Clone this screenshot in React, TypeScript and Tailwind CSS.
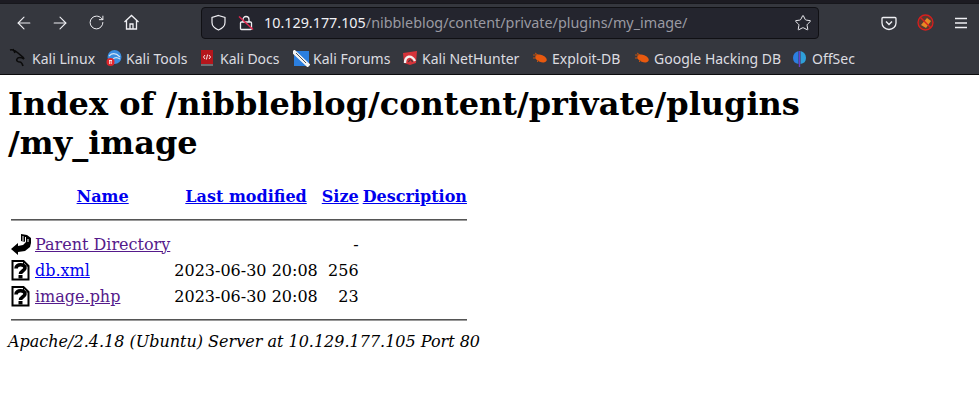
import { ArrowLeft, ArrowRight, RotateCw, Star } from "lucide-react";

const dragon = (
  <svg width="18" height="20" viewBox="0 0 18 20" fill="none" className="-ml-[3px] shrink-0">
    <path d="M1 2c3-1 6 1 8 3 2 2 5 3 6 6M15 11c-3-2-6-2-7 0-1 2 1 3 3 3 1 0 2 1 3 4M4 1l2 4" stroke="#0b0b0b" strokeWidth="1.600" />
  </svg>
);

const toolsIcon = (
  <svg width="16" height="18" viewBox="0 0 16 18" className="shrink-0">
    <circle cx="8.500" cy="8" r="7" fill="#3a8de0" />
    <path d="M3 7c3-3 7-3 11 1M7 10c2-2 4-2 7 0" stroke="#cfe4f7" strokeWidth="1.200" fill="none" />
    <circle cx="4.500" cy="13" r="4" fill="#e0262c" />
    <path d="M3 11.500h3M3.600 11.500v3.500M5.200 11.500v3.500" stroke="#fff" strokeWidth="0.800" />
  </svg>
);

const docsIcon = (
  <svg width="14" height="18" viewBox="0 0 14 18" className="shrink-0">
    <rect x="1" y="1" width="12" height="15" fill="#b5161c" />
    <rect x="1" y="15" width="12" height="2" fill="#6d6f73" />
    <path d="M5 6L3.500 8 5 10M9 6l1.500 2L9 10M7.600 5.500L6.400 10.500" stroke="#fff" strokeWidth="0.900" fill="none" />
  </svg>
);

const forumsIcon = (
  <svg width="17" height="17" viewBox="0 0 17 17" className="shrink-0">
    <path d="M1 1h15v15H1z" fill="#2b7fe0" />
    <path d="M0 1l16 15" stroke="#f4f4f4" strokeWidth="4" />
    <path d="M3 3l10 10" stroke="#50535a" strokeWidth="1" />
  </svg>
);

const hunterIcon = (
  <svg width="16" height="16" viewBox="0 0 16 16" className="shrink-0">
    <path d="M1 3l14-2-1 12-6 2-6-2z" fill="#d6333a" />
    <path d="M3 13C3 6 9 4 13 11" stroke="#f2f2f2" strokeWidth="2.400" fill="none" />
    <path d="M6.500 12c1-3 3-3 4 0" stroke="#3a3a3a" strokeWidth="1.200" fill="none" />
  </svg>
);

const bugIcon = (
  <svg width="16" height="12" viewBox="0 0 16 12" className="shrink-0">
    <ellipse cx="9" cy="6.500" rx="6" ry="3.600" transform="rotate(22 9 6.500)" fill="#e8590f" />
    <path d="M1 3h4M3 1l3 2M1 6h3M5 10l2-2" stroke="#c4520f" strokeWidth="1" />
  </svg>
);

const offsecIcon = (
  <svg width="15" height="18" viewBox="0 0 15 18" className="shrink-0">
    <path d="M6.500 2C3 3 1 5.500 1 9s2 5.500 5.500 6z" fill="#2b7fe0" />
    <path d="M8.500 2C12 3 14 5.500 14 9s-2 5.500-5.500 6z" fill="#2f9fd8" />
    <path d="M7.500 2v16" stroke="#6a3fc8" strokeWidth="1.400" />
  </svg>
);

const bookmarks = [
  { label: "Kali Linux", icon: dragon, width: "w-[94px]" },
  { label: "Kali Tools", icon: toolsIcon, width: "w-[94px]" },
  { label: "Kali Docs", icon: docsIcon, width: "w-[93px]" },
  { label: "Kali Forums", icon: forumsIcon, width: "w-[109px]" },
  { label: "Kali NetHunter", icon: hunterIcon, width: "w-[130px]" },
  { label: "Exploit-DB", icon: bugIcon, width: "w-[102px]" },
  { label: "Google Hacking DB", icon: bugIcon, width: "w-[158px]" },
  { label: "OffSec", icon: offsecIcon, width: "w-[60px]" },
];

const UnknownFile = () => (
  <svg width="20" height="22" viewBox="0 0 20 22" className="block">
    <path d="M1.500 2h11l5 5v13.500h-16z" fill="#fff" stroke="#000" strokeWidth="2" />
    <path d="M12.500 2v5h5" fill="none" stroke="#000" strokeWidth="1" />
    <path d="M5 9.500C5 4.500 14 4.500 14 9c0 2.500-4.500 3-4.500 6" fill="none" stroke="#000" strokeWidth="3.600" />
    <rect x="7.500" y="16" width="4" height="3.500" fill="#000" />
  </svg>
);

const BackIcon = () => (
  <svg width="20" height="22" viewBox="0 0 20 22" className="block">
    <path d="M10 1l6 1 4 3v5l-1 4-5 4-7 1v3L0 16l7-6v3l5-1 3-3-5-1z" fill="#000" />
    <path d="M12 3v5M14.500 4v5M17 6v3" stroke="#fff" strokeWidth="1" />
  </svg>
);

const App = () => {
  return (
    <div className="w-[979px] h-[417px] overflow-hidden bg-white">
      <div className="h-[75px] bg-[#1c1b22] pt-[3px] border-b border-[#0c0c0d] font-['Noto_Sans',sans-serif]">
        <div className="bg-[#35373e] h-[71px] border-t border-[#17171c]">
          {/* Toolbar */}
          <div className="h-[37px] flex items-center text-[#f0f0f4]">
            <div className="flex items-center pl-[14px] w-[201px] shrink-0">
              <ArrowLeft size={20} strokeWidth={1.300} />
              <ArrowRight size={20} strokeWidth={1.300} className="ml-[16px]" />
              <RotateCw size={17} strokeWidth={1.400} className="ml-[18px]" />
              <svg width="17" height="17" viewBox="0 0 17 17" fill="none" className="ml-[18px] shrink-0">
                <path d="M1.500 8L8.500 1.500 15.500 8M3.500 6.500V15h10V6.500M7 15v-5h3v5" stroke="#f0f0f4" strokeWidth="1.300" />
              </svg>
            </div>
            <div className="w-[618px] h-[32px] shrink-0 rounded-[4px] border border-[#101014] bg-[#24252e] flex items-center pl-[8px] pr-[6px]">
              <svg width="17" height="17" viewBox="0 0 17 17" fill="none" className="shrink-0">
                <path d="M8.500 1.500l6.500 2v5c0 3.500-3 6-6.500 7.500C5 14.500 2 12 2 8.500v-5z" stroke="#f0f0f4" strokeWidth="1.200" />
              </svg>
              <svg width="16" height="16" viewBox="0 0 16 16" fill="none" className="ml-[11px] shrink-0">
                <rect x="2.500" y="7" width="11" height="7.500" rx="1" stroke="#f0f0f4" strokeWidth="1.300" />
                <path d="M5 7V4.500a3 3 0 0 1 6 0V7" stroke="#f0f0f4" strokeWidth="1.300" />
                <path d="M1 1.500l14 13" stroke="#e22850" strokeWidth="1.500" />
              </svg>
              <div className="ml-[10px] text-[14.350px] leading-[22px] pt-px whitespace-nowrap grow">
                10.129.177.105<span className="text-[#9a9aa2]">/nibbleblog/content/private/plugins/my_image/</span>
              </div>
              <Star size={18} strokeWidth={1.300} />
            </div>
            <div className="flex items-center grow pl-[62px]">
              <svg width="16" height="16" viewBox="0 0 16 16" fill="none" className="shrink-0">
                <path d="M2 2.500h12a1 1 0 0 1 1 1V8a7 6.500 0 0 1-14 0V3.500a1 1 0 0 1 1-1z" stroke="#f0f0f4" strokeWidth="1.300" />
                <path d="M5 6.500l3 3 3-3" stroke="#f0f0f4" strokeWidth="1.400" />
              </svg>
              <svg width="17" height="17" viewBox="0 0 17 17" fill="none" className="ml-[20px] shrink-0">
                <circle cx="8.500" cy="8.500" r="7.500" fill="#5a3a30" stroke="#d81e1e" strokeWidth="1.300" />
                <path d="M4 11l6-7 4 3-5 7z" fill="#e88a24" />
                <path d="M3 3l11 11" stroke="#d81e1e" strokeWidth="1.400" />
              </svg>
              <svg width="14" height="12" viewBox="0 0 14 12" fill="none" className="ml-[20px] shrink-0">
                <path d="M1 1.500h12M1 6h12M1 10.500h12" stroke="#f0f0f4" strokeWidth="1.400" />
              </svg>
            </div>
          </div>
          {/* Bookmarks */}
          <div className="h-[33px] flex items-center pl-[12px] pt-px text-[14px] text-[#dcdce0] whitespace-nowrap">
            {bookmarks.map((b) => (
              <div key={b.label} className={`flex items-center shrink-0 ${b.width}`}>
                <div className="w-[20px] flex shrink-0">{b.icon}</div>
                <span>{b.label}</span>
              </div>
            ))}
          </div>
        </div>
      </div>

      {/* Directory listing */}
      <div className="m-2 font-['DejaVu_Serif',serif] text-[16px] leading-[19px] text-black">
        <h1 className="text-[32px] leading-[39px] font-bold mt-[10px] mb-[21px]">
          Index of /nibbleblog/content/private/plugins /my_image
        </h1>
        <table className="border-separate border-spacing-[2px]">
          <tbody>
            <tr>
              <th className="p-px"></th>
              <th className="p-px"><a href="#" className="text-[#0000ee] underline">Name</a></th>
              <th className="p-px"><a href="#" className="text-[#0000ee] underline">Last modified</a></th>
              <th className="p-px"><a href="#" className="text-[#0000ee] underline">Size</a></th>
              <th className="p-px"><a href="#" className="text-[#0000ee] underline">Description</a></th>
            </tr>
            <tr>
              <th colSpan={5} className="p-px">
                <hr className="mt-[9px] mb-2 border-t border-b border-t-[#555555] border-b-[#9a9a9a] h-[2px]" />
              </th>
            </tr>
            <tr>
              <td className="p-px"><BackIcon /></td>
              <td className="p-px"><a href="#" className="text-[#551a8b] underline">Parent Directory</a></td>
              <td className="p-px"></td>
              <td className="p-px text-right">-</td>
              <td className="p-px"></td>
            </tr>
            <tr>
              <td className="p-px"><UnknownFile /></td>
              <td className="p-px"><a href="#" className="text-[#0000ee] underline">db.xml</a></td>
              <td className="p-px text-right">2023-06-30 20:08</td>
              <td className="p-px text-right">256</td>
              <td className="p-px"></td>
            </tr>
            <tr>
              <td className="p-px"><UnknownFile /></td>
              <td className="p-px"><a href="#" className="text-[#551a8b] underline">image.php</a></td>
              <td className="p-px text-right">2023-06-30 20:08</td>
              <td className="p-px text-right">23</td>
              <td className="p-px"></td>
            </tr>
            <tr>
              <th colSpan={5} className="p-px">
                <hr className="my-2 border-t border-b border-t-[#555555] border-b-[#9a9a9a] h-[2px]" />
              </th>
            </tr>
          </tbody>
        </table>
        <address className="italic">Apache/2.4.18 (Ubuntu) Server at 10.129.177.105 Port 80</address>
      </div>
    </div>
  );
};

export default App;
